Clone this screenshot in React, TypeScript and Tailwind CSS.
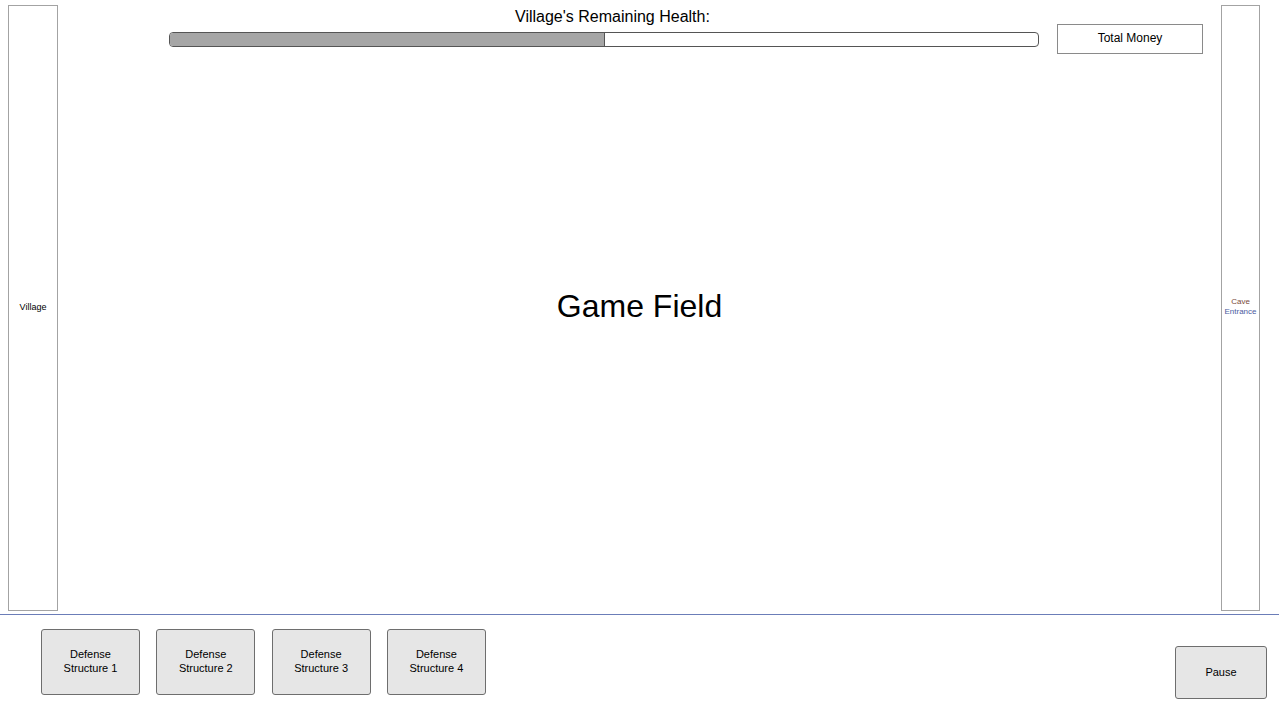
const FONT = "font-['Liberation_Sans',Arial,sans-serif]";

const STRUCTURES = [1, 2, 3, 4];

function SideColumn({ children, className }: { children: React.ReactNode; className?: string }) {
  return (
    <div
      className={`mt-[5px] flex h-[606px] shrink-0 items-center justify-center border border-[#a3a3a3] bg-white text-center ${className ?? ""}`}
    >
      {children}
    </div>
  );
}

function StructureButton({ n }: { n: number }) {
  return (
    <button
      type="button"
      className="flex h-[66px] w-[99px] shrink-0 flex-col items-center justify-center rounded-[3px] border border-[#6e6e6e] bg-[#e6e6e6] pb-[2px] text-[11px] leading-[14px] text-black"
    >
      <span>Defense</span>
      <span>Structure {n}</span>
    </button>
  );
}

export default function App() {
  return (
    <div className={`${FONT} flex h-[718px] w-[1279px] flex-col overflow-hidden bg-white text-black`}>
      {/* field area */}
      <div className="flex h-[614px] shrink-0">
        <SideColumn className="ml-2 w-[50px] text-[9px]">
          <span>Village</span>
        </SideColumn>

        <div className="flex flex-1 flex-col">
          <div className="flex items-start">
            <div className="ml-[111px] flex w-[870px] flex-col">
              <div className="pl-[346px] pt-[7px] text-[16px] leading-[20px] whitespace-nowrap">
                Village's Remaining Health:
              </div>
              <div className="mt-[5px] flex h-[15px] overflow-hidden rounded-[4px] border border-[#555555] bg-white">
                <div className="h-full w-[435px] border-r border-[#555555] bg-[#a6a6a6]" />
              </div>
            </div>
            <div className="ml-[18px] mt-6 flex h-[30px] w-[146px] items-center justify-center border border-[#8a8a8a] pb-[2px] text-[12px]">
              Total Money
            </div>
          </div>
          <div className="flex flex-1 items-center justify-center pb-[56px]">
            <span className="text-[32px] leading-none">Game Field</span>
          </div>
        </div>

        <SideColumn className="mr-[19px] w-[39px] flex-col pb-[2px] text-[8px] leading-[10px]">
          <span className="text-[#7a4a3a]">Cave</span>
          <span className="text-[#4a5aa0]">Entrance</span>
        </SideColumn>
      </div>

      {/* build bar */}
      <div className="h-px shrink-0 bg-[#6b7db8]" />
      <div className="flex flex-1 items-start">
        <div className="ml-[41px] mt-[14px] flex gap-[16.3px]">
          {STRUCTURES.map((n) => (
            <StructureButton key={n} n={n} />
          ))}
        </div>
        <button
          type="button"
          className="ml-auto mr-[12px] mt-[31px] flex h-[53px] w-[92px] items-center justify-center rounded-[3px] border border-[#6e6e6e] bg-[#e6e6e6] text-[11px]"
        >
          Pause
        </button>
      </div>
    </div>
  );
}
